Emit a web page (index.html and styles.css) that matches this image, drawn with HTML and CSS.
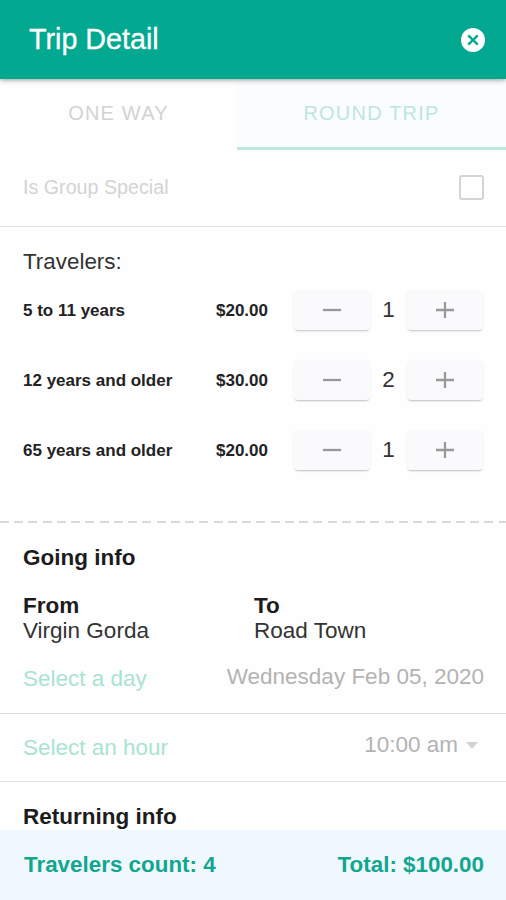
FILE: index.html
```html
<!DOCTYPE html>
<html lang="en">
<head>
<meta charset="utf-8">
<title>Trip Detail</title>
<link rel="stylesheet" href="styles.css">
</head>
<body>
<div class="app">
  <header class="header">
    <h1 class="title">Trip Detail</h1>
    <svg class="close" viewBox="0 0 24 24"><circle cx="12" cy="12" r="12" fill="#fff"/><path d="M7.3 7.3l9.4 9.4M16.7 7.3l-9.4 9.4" stroke="#02a890" stroke-width="2.4"/></svg>
  </header>
  <nav class="tabs">
    <div class="tab">ONE WAY</div>
    <div class="tab active"><span>ROUND TRIP</span></div>
  </nav>
  <div class="group"><span>Is Group Special</span><span class="checkbox"></span></div>
  <section class="travelers">
    <h2 class="travelers-title">Travelers:</h2>
    <div class="traveler">
      <span class="age">5 to 11 years</span><span class="price">$20.00</span>
      <span class="btn"><svg viewBox="0 0 18 18"><path d="M0 9h18"/></svg></span><span class="count">1</span><span class="btn"><svg viewBox="0 0 18 18"><path d="M0 9h18M9 1v16"/></svg></span>
    </div>
    <div class="traveler">
      <span class="age">12 years and older</span><span class="price">$30.00</span>
      <span class="btn"><svg viewBox="0 0 18 18"><path d="M0 9h18"/></svg></span><span class="count">2</span><span class="btn"><svg viewBox="0 0 18 18"><path d="M0 9h18M9 1v16"/></svg></span>
    </div>
    <div class="traveler">
      <span class="age">65 years and older</span><span class="price">$20.00</span>
      <span class="btn"><svg viewBox="0 0 18 18"><path d="M0 9h18"/></svg></span><span class="count">1</span><span class="btn"><svg viewBox="0 0 18 18"><path d="M0 9h18M9 1v16"/></svg></span>
    </div>
  </section>
  <div class="dashes"></div>
  <section class="going">
    <h2 class="section-title">Going info</h2>
    <div class="route">
      <div><b>From</b><p>Virgin Gorda</p></div>
      <div><b>To</b><p>Road Town</p></div>
    </div>
    <div class="field day"><span class="label">Select a day</span><span class="value">Wednesday Feb 05, 2020</span></div>
    <div class="field hour"><span class="label">Select an hour</span><span class="value time">10:00 am<i class="caret"></i></span></div>
  </section>
  <section class="returning"><h2 class="section-title">Returning info</h2></section>
  <footer class="footer"><span>Travelers count: 4</span><span>Total: $100.00</span></footer>
</div>
</body>
</html>
```
FILE: styles.css
```css
* { box-sizing: border-box; }
body, h1, h2, p { margin: 0; }
body {
  font-family: "Liberation Sans", Arial, sans-serif;
  font-size: 22.5px;
  color: #333;
  background: #fefefe;
}
.app { width: 506px; height: 900px; overflow: hidden; display: flex; flex-direction: column; white-space: nowrap; }
.app > * { flex: none; }
.header {
  height: 79px; padding: 0 21px 0 29px;
  display: flex; align-items: center; justify-content: space-between;
  background: #02a890; color: #fff;
  box-shadow: 0 1px 5px rgba(0, 0, 0, .4);
  z-index: 1;
}
.title { font-size: 28.7px; font-weight: 400; padding-bottom: 1px; -webkit-text-stroke: .3px #fff; }
.close { width: 24px; height: 24px; position: relative; top: .5px; }
.tabs { display: flex; height: 71px; font-size: 20px; letter-spacing: 1.2px; color: #d3d3d3; }
.tab { width: 237px; display: flex; align-items: center; justify-content: center; padding-bottom: 3px; }
.tab.active { width: 269px; padding: 0; border-bottom: 3px solid #bde7df; color: #bde6dc; background: #fafdff; }
.group {
  height: 77px; padding: 0 22px 2px 23px; font-size: 19.7px; color: #d3d3d3;
  display: flex; align-items: center; justify-content: space-between;
  border-bottom: 1px solid #dedede;
}
.checkbox { width: 25px; height: 25px; border: 2px solid #d4d4d4; border-radius: 3px; }
.travelers { height: 294px; padding: 14px 23px 0 23px; }
.travelers-title { font-size: 22.4px; line-height: 42px; height: 49px; font-weight: 400; }
.traveler { height: 70px; padding-bottom: 30px; display: flex; align-items: center; }
.age, .price { font-size: 17px; font-weight: 700; color: #222; padding-top: 1px; }
.age { width: 193px; }
.price { width: 78px; }
.btn {
  width: 76px; height: 39px; border-radius: 4px; background: #fafafc;
  display: flex; align-items: center; justify-content: center;
  box-shadow: 0 2px 2px -1px rgba(0, 0, 0, .24), 0 0 3px rgba(0, 0, 0, .05);
}
.btn svg { width: 18px; height: 18px; fill: none; stroke: #999; stroke-width: 2.3; }
.count { width: 37px; text-align: center; font-size: 22.5px; }
.dashes { height: 2px; background: repeating-linear-gradient(90deg, #d9d9d9 0 9px, transparent 9px 14.25px); }
.section-title { font-size: 22.5px; line-height: 26px; font-weight: 700; color: #1c1c1c; }
.going { padding-top: 22px; }
.going .section-title, .returning .section-title { padding-left: 23px; }
.route { display: grid; grid-template-columns: 231px 1fr; padding: 22px 0 0 23px; line-height: 26px; }
.route b { display: block; color: #1c1c1c; line-height: 25px; }
.field { display: flex; justify-content: space-between; padding: 0 22px 0 23px; border-bottom: 1px solid #dedede; }
.label { color: #a9e3d2; }
.value { color: #b3b3b3; }
.day { height: 70px; padding-top: 20px; }
.day .label { padding-top: 2px; }
.hour { height: 68px; padding-top: 18px; }
.hour .label { padding-top: 3px; }
.time { padding-right: 6px; }
.caret {
  display: inline-block; margin-left: 8px; vertical-align: 3px;
  border: 6px solid transparent; border-top: 7px solid #d2d2d2; border-bottom: 0;
}
.returning { height: 48px; padding-top: 22px; }
.footer {
  height: 70px; padding: 0 22px 0 24px;
  display: flex; align-items: center; justify-content: space-between;
  background: #eff8ff; color: #13a68d; font-size: 22.4px; font-weight: 700;
}
```
